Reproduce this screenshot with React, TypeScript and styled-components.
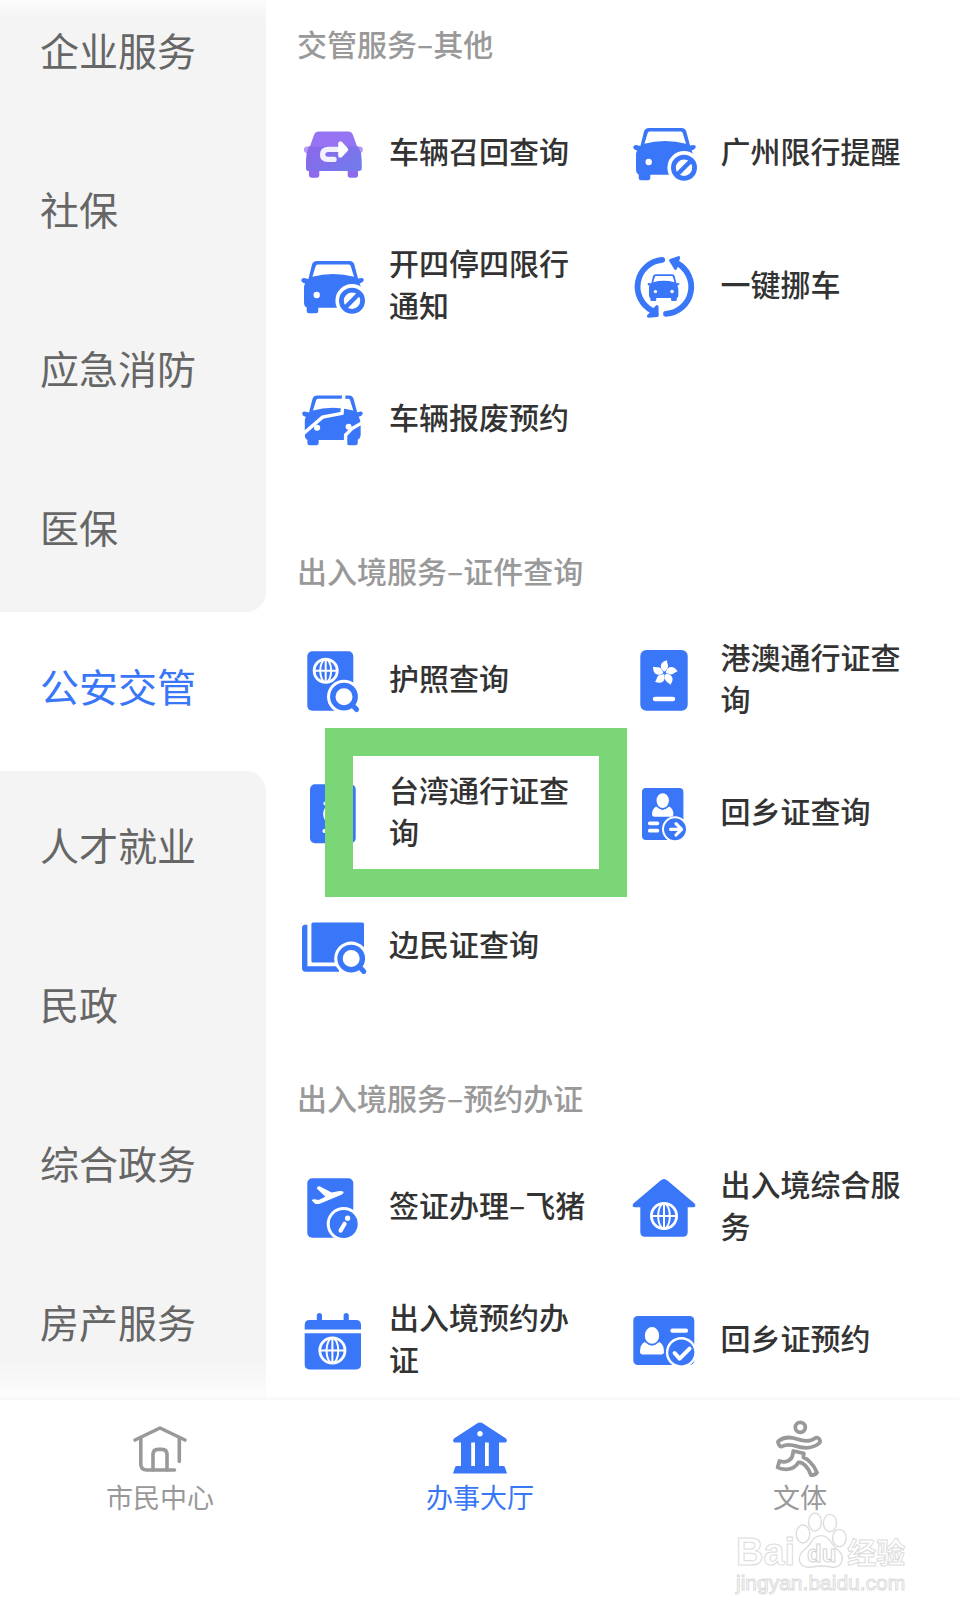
import React from 'react';
import styled, { createGlobalStyle } from 'styled-components';

const BLUE = '#3a76f8';
const GREY = '#999999';

const GlobalStyle = createGlobalStyle`
  *, *::before, *::after { box-sizing: border-box; }
  body {
    margin: 0;
    background: #ffffff;
    font-family: "Noto Sans CJK SC", "Liberation Sans", sans-serif;
  }
`;

const Shell = styled.div`
  display: flex;
  flex-direction: column;
  height: 100vh;
`;

const Main = styled.main`
  position: relative;
  flex: 1;
  min-height: 0;
  display: flex;
  overflow: hidden;
`;

const Sidebar = styled.nav`
  position: relative;
  flex: 0 0 266px;
  overflow: hidden;
  background: #ffffff;

  &::before,
  &::after {
    content: '';
    position: absolute;
    left: 0;
    right: 0;
    pointer-events: none;
  }
  &::before {
    top: 0;
    height: 20px;
    background: linear-gradient(to bottom, rgba(255, 255, 255, 0.7), rgba(255, 255, 255, 0));
  }
  &::after {
    bottom: 0;
    height: 40px;
    background: linear-gradient(to top, rgba(255, 255, 255, 0.8), rgba(255, 255, 255, 0));
  }
`;

const CategoryList = styled.div`
  display: flex;
  flex-direction: column;
  margin-top: -24px;
`;

type Edge = 'active' | 'before' | 'after' | 'none';

const Category = styled.button<{ $edge: Edge }>`
  height: 159px;
  flex: none;
  border: 0;
  padding: 0 0 14px 40px;
  text-align: left;
  font: 400 39px/54px "Noto Sans CJK SC", sans-serif;
  color: ${(p) => (p.$edge === 'active' ? BLUE : '#666666')};
  background: ${(p) => (p.$edge === 'active' ? '#ffffff' : '#f4f4f4')};
  border-radius: ${(p) =>
    p.$edge === 'before' ? '0 0 20px 0' : p.$edge === 'after' ? '0 20px 0 0' : '0'};
`;

const Content = styled.div`
  flex: 1;
  min-width: 0;
  overflow: hidden;
  padding-left: 31px;
`;

const Sections = styled.div`
  margin-top: -42px;
`;

const SectionTitle = styled.h2`
  margin: 0;
  padding: 64px 0 22px;
  font-size: 30px;
  line-height: 42px;
  font-weight: 500;
  color: ${GREY};
`;

const ServiceGrid = styled.div`
  display: grid;
  grid-template-columns: 1fr 1fr;
  grid-auto-rows: 133px;
`;

const Service = styled.a`
  position: relative;
  display: flex;
  align-items: center;
  gap: 20px;
  padding-right: 36px;
  color: #333333;
  font-size: 30px;
  line-height: 42px;
  font-weight: 500;
  text-decoration: none;
`;

const ServiceIcon = styled.svg`
  flex: none;
  width: 72px;
  height: 72px;
`;

const ServiceLabel = styled.span`
  padding-bottom: 6px;
`;

const Highlight = styled.span`
  position: absolute;
  inset: -18px 2px -18px 28px;
  border: 28px solid #7bd678;
  z-index: 1;
`;

const TabBar = styled.nav`
  position: relative;
  flex: none;
  display: grid;
  grid-template-columns: repeat(3, 1fr);
  height: 215px;
  padding-top: 18px;
  background: #ffffff;
  box-shadow: 0 -1px 4px rgba(0, 0, 0, 0.05);
`;

const Tab = styled.button<{ $active?: boolean }>`
  display: flex;
  flex-direction: column;
  align-items: center;
  justify-content: flex-start;
  gap: 1px;
  border: 0;
  padding: 0;
  background: none;
  font: 400 27px/36px "Noto Sans CJK SC", sans-serif;
  color: ${(p) => (p.$active ? BLUE : GREY)};
`;

const TabIcon = styled.svg`
  width: 60px;
  height: 60px;
`;

const Watermark = styled.div`
  position: absolute;
  right: 50px;
  bottom: 19px;
  display: flex;
  flex-direction: column;
  width: 174px;
  color: #ffffff;
  -webkit-text-stroke: 1px #dcdcdc;
`;

const WatermarkRow = styled.div`
  display: flex;
  align-items: flex-end;
`;

const Latin = styled.span`
  font: 700 38px/36px "Liberation Sans", sans-serif;
`;

const Han = styled.span`
  font: 700 29px/38px "Noto Sans CJK SC", sans-serif;
`;

const Url = styled.span`
  font: 400 21px/26px "Liberation Sans", sans-serif;
`;

const Paw = styled.svg`
  flex: none;
  width: 52px;
  height: 58px;
`;

const Globe = ({ x, y, r }: { x: number; y: number; r: number }) => (
  <g fill="none" stroke="#fff" strokeWidth="2">
    <circle cx={x} cy={y} r={r - 1.4} strokeWidth="2.8" />
    <ellipse cx={x} cy={y} rx={r * 0.42} ry={r - 1.5} />
    <path d={`M${x - r + 1} ${y}H${x + r - 1}M${x} ${y - r + 1}V${y + r - 1}`} />
  </g>
);

const Magnifier = ({ x, y }: { x: number; y: number }) => (
  <g>
    <circle cx={x} cy={y} r="17" fill="#fff" />
    <circle cx={x} cy={y} r="11.2" fill="#fff" stroke={BLUE} strokeWidth="5.4" />
    <path d={`M${x + 8} ${y + 8}L${x + 12.6} ${y + 12.8}`} stroke={BLUE} strokeWidth="5" strokeLinecap="round" />
  </g>
);

const CarShape = () => (
  <g>
    <path
      fill={BLUE}
      fillRule="evenodd"
      d="M20 11H52.5Q56.3 11 57.3 14.6L61 28.6 64.6 28Q67.2 28.2 66.6 30.8 66 32.6 62.6 33.4 64.6 37 64.6 41V53Q64.6 56 61.6 57.6V61Q61.6 63.3 59 63.3H52.6Q50.3 63.3 50.3 61V57.8H21.3V61Q21.3 63.3 19 63.3H12Q9.7 63.3 9.7 61V57.6Q7 56.6 7 52V37.5Q7 35 8.2 33.6 4.6 32.6 4.3 30.6 4.2 28 7 28L11.4 29 15 14.6Q16 11 20 11ZM20.6 14.6Q19 14.6 18.6 16.2L15.4 26.8Q25 24 36 24T57 26.8L53.8 16.2Q53.4 14.6 52 14.6Z"
    />
    <circle cx="19.7" cy="45" r="3.2" fill="#fff" />
  </g>
);

const icons: Record<string, React.ReactNode> = {
  recall: (
    <>
      <defs>
        <linearGradient id="recallBody" x1="0" y1="0" x2="1" y2="0.6">
          <stop offset="0" stopColor="#8c66ea" />
          <stop offset="1" stopColor="#7479ec" />
        </linearGradient>
      </defs>
      <rect x="7" y="29.6" width="58.8" height="6.4" rx="3" fill="#b796f4" />
      <path fill="#9673f3" d="M22 14.6H51Q54.6 14.6 56 18L61 32H12L17 18Q18.4 14.6 22 14.6Z" />
      <path fill="#8d6bec" d="M12 52H22.3V58Q22.3 60.7 19.6 60.7H14.7Q12 60.7 12 58ZM50.7 52H61V58Q61 60.7 58.3 60.7H53.4Q50.7 60.7 50.7 58Z" />
      <path fill="url(#recallBody)" d="M12 29.6H61L64 36Q65 43 64.8 51 64.8 54 62 54H11Q9 54 9 51 8.6 43 9.6 36Z" />
      <path d="M37 42.4H31Q25.6 42.4 25.6 37.6T31 32.4H44" fill="none" stroke="#f3effe" strokeWidth="5.4" strokeLinecap="round" />
      <path d="M43.4 26.6V38.6L49 32.6Z" fill="#fff" stroke="#fff" strokeWidth="4.4" strokeLinejoin="round" />
    </>
  ),
  limit: (
    <>
      <CarShape />
      <circle cx="55" cy="50.7" r="16.6" fill="#fff" />
      <circle cx="55" cy="50.7" r="10.6" fill="none" stroke={BLUE} strokeWidth="4.8" />
      <path d="M48.5 57.2L61.5 44.2" stroke={BLUE} strokeWidth="4.4" />
    </>
  ),
  move: (
    <>
      <g transform="translate(16.4 18.6) scale(0.51)">
        <CarShape />
        <circle cx="52.3" cy="45" r="3.4" fill="#fff" />
      </g>
      <g fill="none" stroke={BLUE} strokeWidth="5.8" strokeLinecap="round">
        <path d="M33.2 9.8A27 27 0 0 0 23 60.6" />
        <path d="M47.5 12.8A27 27 0 0 1 37 63.8" />
      </g>
      <g fill={BLUE} stroke={BLUE} strokeWidth="3" strokeLinejoin="round">
        <path d="M41.6 10.4L49.6 7.6 46.6 18.4Z" />
        <path d="M28 56.6L28.2 65.6 19.4 66.2Z" />
      </g>
    </>
  ),
  scrap: (
    <>
      <g transform="translate(1 2) scale(0.97 0.95)">
        <CarShape />
      </g>
      <circle cx="51.6" cy="43.8" r="3" fill="#fff" />
      <g fill="none" stroke="#fff" strokeWidth="3.4">
        <path d="M6 51L25.5 34.2 45 30.4 47 10" />
        <path d="M67 38.6L55 45.6 48.6 52V64" />
      </g>
    </>
  ),
  passport: (
    <>
      <rect x="10.3" y="7.3" width="46" height="59.4" rx="5" fill={BLUE} />
      <Globe x={28.7} y={26.7} r={13} />
      <Magnifier x={47} y={52.7} />
    </>
  ),
  hongkong: (
    <>
      <rect x="11.3" y="6" width="47.4" height="60.7" rx="6" fill={BLUE} />
      <g fill="#fff" transform="translate(35.6 29)">
        {[0, 72, 144, 216, 288].map((a) => (
          <path key={a} transform={`rotate(${a})`} d="M-0.4 -1.2C-6 -5 -4.5 -11.5 2.6 -12.8 1.6 -10.4 5.6 -7 2 -3.4Q1 -2 -0.4 -1.2Z" />
        ))}
      </g>
      <path d="M26 55H44" stroke="#fff" strokeWidth="4.4" strokeLinecap="round" />
    </>
  ),
  taiwan: (
    <>
      <rect x="13" y="7.3" width="45.7" height="59" rx="5" fill={BLUE} />
      <path d="M28.4 26.4V26.5M29 33Q27.4 37 29 41M27.4 54H44" fill="none" stroke="#fff" strokeWidth="4" strokeLinecap="round" />
    </>
  ),
  homeland: (
    <>
      <rect x="13" y="11" width="41.4" height="52" rx="4" fill={BLUE} />
      <path fill="#fff" d="M27 29.5L33.6 33 40.4 29.5Q44.4 32 44.4 37.6 44.4 39.7 42.4 39.7H25Q23 39.7 23 37.6 23 32 27 29.5Z" />
      <ellipse cx="33.7" cy="23.6" rx="7" ry="8.2" fill="#fff" stroke={BLUE} strokeWidth="1.6" />
      <path d="M20.8 46.3H28.4M20.8 53.7H28.4" stroke="#fff" strokeWidth="3.8" strokeLinecap="round" />
      <circle cx="46" cy="52.3" r="13" fill="#fff" />
      <circle cx="46" cy="52.3" r="11" fill={BLUE} />
      <path d="M41.6 52.3H52M47 46.6L52.6 52.3 47 58" fill="none" stroke="#fff" strokeWidth="3.2" strokeLinecap="round" strokeLinejoin="round" />
    </>
  ),
  border: (
    <>
      <path fill={BLUE} d="M10.4 14.8V56.2H42V61.7H8.5Q5 61.7 5 58V18Q5 15 8 14.8Z" />
      <rect x="14.4" y="12.6" width="52.6" height="40" rx="1.6" fill={BLUE} />
      <Magnifier x={54.2} y={48.6} />
    </>
  ),
  visa: (
    <>
      <rect x="10.3" y="7.3" width="46" height="59.4" rx="5" fill={BLUE} />
      <path fill="#fff" d="M19.8 17.6Q20 15 22.6 15.2L34.6 21.4 42.6 20Q47.6 19.8 46.4 22 45.6 23.4 42 24.8L24 32.2Q20 33.8 17.8 32.6L14.8 29.6Q15.4 27.8 17.6 28.2L21.6 29 28.4 25.8Z" />
      <circle cx="46.7" cy="53" r="17" fill="#fff" />
      <circle cx="46.7" cy="53" r="14" fill={BLUE} />
      <circle cx="50.6" cy="47.2" r="2.6" fill="#fff" />
      <path d="M47.6 52.8L43.6 59.6" stroke="#fff" strokeWidth="4.2" strokeLinecap="round" />
    </>
  ),
  calendar: (
    <>
      <path fill={BLUE} d="M7.7 25.6V21Q7.7 16 12.7 16H19.8V11.5Q19.8 9 22.4 9T25 11.5V16H46.6V11.5Q46.6 9 49.2 9T51.8 11.5V16H59Q64 16 64 21V25.6Z" />
      <path fill={BLUE} d="M7.7 29.3H64V60.6Q64 65.4 59.2 65.4H12.5Q7.7 65.4 7.7 60.6Z" />
      <Globe x={35.4} y={46.5} r={14} />
    </>
  ),
  house: (
    <>
      <path fill={BLUE} d="M31.6 9.6Q35 6.6 38.4 9.6L65.6 32.6Q67.6 35.8 64.6 36.2H58.7V61Q58.7 65.8 54 65.8H16Q11.3 65.8 11.3 61V36.2H5.4Q2.4 35.8 4.4 32.6Z" />
      <Globe x={35} y={45} r={14} />
    </>
  ),
  idcheck: (
    <>
      <rect x="4.3" y="12" width="61" height="49" rx="4.6" fill={BLUE} />
      <path fill="#fff" d="M15.6 38L23 41.6 30.4 38Q35 40.6 35 47.6 35 50.4 32.6 50.4H13.4Q11 50.4 11 47.6 11 40.6 15.6 38Z" />
      <ellipse cx="23" cy="31.4" rx="8" ry="9.2" fill="#fff" stroke={BLUE} strokeWidth="1.6" />
      <path d="M43.4 26.7H57" stroke="#fff" strokeWidth="4.2" strokeLinecap="round" />
      <circle cx="52.3" cy="48.4" r="15.4" fill="#fff" />
      <circle cx="52.3" cy="48.4" r="13" fill={BLUE} />
      <path d="M45.6 49L50.6 54.6 60.6 44.6" fill="none" stroke="#fff" strokeWidth="4" strokeLinecap="round" strokeLinejoin="round" />
    </>
  ),
};

interface ServiceData {
  icon: string;
  label: string;
  highlighted?: boolean;
}

const sections: { title: string; services: ServiceData[] }[] = [
  {
    title: '交管服务–其他',
    services: [
      { icon: 'recall', label: '车辆召回查询' },
      { icon: 'limit', label: '广州限行提醒' },
      { icon: 'limit', label: '开四停四限行通知' },
      { icon: 'move', label: '一键挪车' },
      { icon: 'scrap', label: '车辆报废预约' },
    ],
  },
  {
    title: '出入境服务–证件查询',
    services: [
      { icon: 'passport', label: '护照查询' },
      { icon: 'hongkong', label: '港澳通行证查询' },
      { icon: 'taiwan', label: '台湾通行证查询', highlighted: true },
      { icon: 'homeland', label: '回乡证查询' },
      { icon: 'border', label: '边民证查询' },
    ],
  },
  {
    title: '出入境服务–预约办证',
    services: [
      { icon: 'visa', label: '签证办理–飞猪' },
      { icon: 'house', label: '出入境综合服务' },
      { icon: 'calendar', label: '出入境预约办证' },
      { icon: 'idcheck', label: '回乡证预约' },
    ],
  },
];

const categories = [
  '企业服务',
  '社保',
  '应急消防',
  '医保',
  '公安交管',
  '人才就业',
  '民政',
  '综合政务',
  '房产服务',
];
const activeCategory = 4;

const edgeOf = (i: number): Edge => {
  if (i === activeCategory) return 'active';
  if (i === activeCategory - 1) return 'before';
  if (i === activeCategory + 1) return 'after';
  return 'none';
};

export default function App() {
  return (
    <Shell>
      <GlobalStyle />
      <Main>
        <Sidebar>
          <CategoryList>
            {categories.map((name, i) => (
              <Category key={name} type="button" $edge={edgeOf(i)}>
                {name}
              </Category>
            ))}
          </CategoryList>
        </Sidebar>
        <Content>
          <Sections>
            {sections.map((section) => (
              <section key={section.title}>
                <SectionTitle>{section.title}</SectionTitle>
                <ServiceGrid>
                  {section.services.map((service) => (
                    <Service key={service.label} href="#">
                      <ServiceIcon viewBox="0 0 72 72" aria-hidden="true">
                        {icons[service.icon]}
                      </ServiceIcon>
                      <ServiceLabel>{service.label}</ServiceLabel>
                      {service.highlighted && <Highlight />}
                    </Service>
                  ))}
                </ServiceGrid>
              </section>
            ))}
          </Sections>
        </Content>
      </Main>
      <TabBar>
        <Tab type="button">
          <TabIcon viewBox="0 0 60 60" fill="none" stroke={GREY} strokeWidth="3.6" strokeLinecap="round" strokeLinejoin="round" aria-hidden="true">
            <path d="M5 22L30 10 55 22" />
            <path d="M10.8 20V46Q10.8 52 17 52H44.5M49.3 20V43.5" />
            <path d="M23 52V37Q23 31.4 28 31.4H32Q37 31.4 37 37V52" />
          </TabIcon>
          市民中心
        </Tab>
        <Tab type="button" $active>
          <TabIcon viewBox="0 0 60 60" fill={BLUE} aria-hidden="true">
            <path
              fillRule="evenodd"
              d="M26.6 5.8Q30 3.4 33.4 5.8L56 20.6Q58 23.4 55.6 24.4H49V48H53Q54.6 48 55 49.4L57 55.4H3L5 49.4Q5.4 48 7 48H11V24.4H4.4Q2 23.4 4 20.6ZM21.2 24.4V48H25V24.4ZM35 24.4V48H38.8V24.4ZM30 13A2.7 2.7 0 1 0 30 18.4 2.7 2.7 0 1 0 30 13Z"
            />
          </TabIcon>
          办事大厅
        </Tab>
        <Tab type="button">
          <TabIcon viewBox="0 0 60 60" fill="none" stroke={GREY} strokeWidth="3.8" strokeLinejoin="round" aria-hidden="true">
            <circle cx="30.3" cy="9.3" r="5" />
            <path d="M9 22.6C14 19 21 19 27 21 34 23.6 39.5 24.4 45 20.2Q47.4 18.8 49.2 21L50 22.6Q50.6 24 49 25.4C43 30.4 34 30.6 27 28.4 21 26.4 16 26.4 12 28.4Q10.4 29 9.4 27.4L8.2 25Q7.6 23.6 9 22.6Z" />
            <path d="M23.3 33L33.8 35.4 33.4 39.4Q37 40.6 40 44 45 49 47 54.6 44.6 57.2 41 57.2 39.6 52 35.4 47.6 32 44 28.4 44.4 25 50 18 51.2 12 51.8 7.6 49.4L9.4 43Q14 44.6 18 43 22 41 22.6 37Z" />
          </TabIcon>
          文体
        </Tab>
        <Watermark>
          <WatermarkRow>
            <Latin>Bai</Latin>
            <Paw viewBox="0 0 52 58" aria-hidden="true">
              <g fill="#fff" stroke="#dcdcdc" strokeWidth="1.4">
                <ellipse cx="8" cy="22" rx="6.8" ry="9" />
                <ellipse cx="20" cy="10" rx="6.4" ry="9" />
                <ellipse cx="35" cy="11" rx="6.6" ry="8.6" />
                <ellipse cx="44.4" cy="26" rx="6.8" ry="8.6" />
                <path d="M26 23.6Q32 23.6 36 30T44 39Q49 44 46.6 50 43.6 56.6 36 55 26 53 17 55 8 56.6 4.8 50 3 43 9 38T16 30Q20 23.6 26 23.6Z" />
              </g>
              <text x="12" y="50" fontFamily="Liberation Sans, sans-serif" fontSize="24" fontWeight="700" fill="#fff" stroke="#d4d4d4" strokeWidth="1">
                du
              </text>
            </Paw>
            <Han>经验</Han>
          </WatermarkRow>
          <Url>jingyan.baidu.com</Url>
        </Watermark>
      </TabBar>
    </Shell>
  );
}
